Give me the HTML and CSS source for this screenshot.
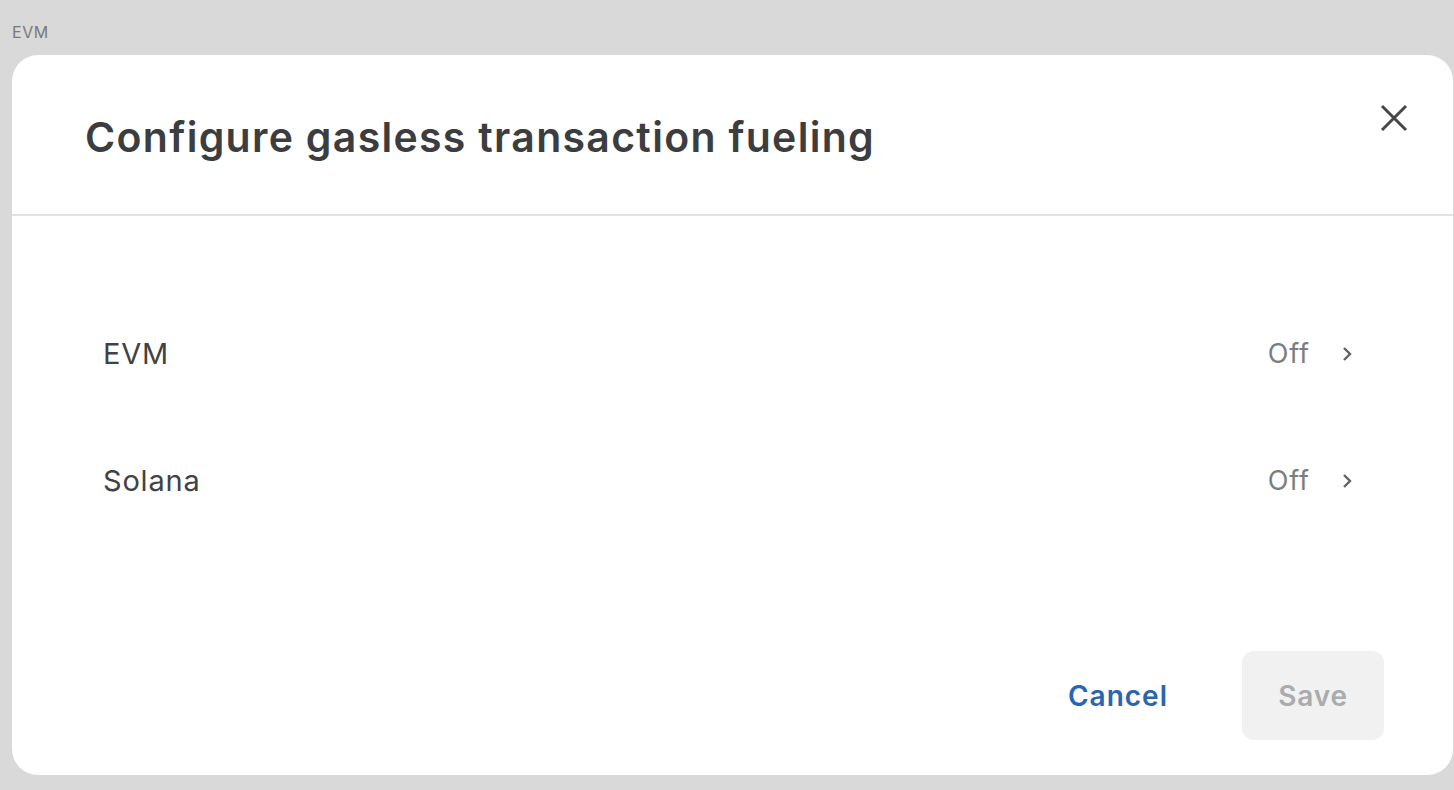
FILE: index.html
```html
<!DOCTYPE html>
<html>
<head>
<meta charset="utf-8">
<link rel="stylesheet" href="styles.css">
</head>
<body>
<div class="page">
  <div class="crumb">EVM</div>
  <div class="modal">
    <div class="modal-head">
      <h1 class="title">Configure gasless transaction fueling</h1>
      <button class="close" aria-label="Close">
        <svg width="30" height="30" viewBox="0 0 30 30"><path d="M3 3 L27 27 M27 3 L3 27" stroke="#444746" stroke-width="3" stroke-linecap="butt" fill="none"/></svg>
      </button>
    </div>
    <div class="modal-body">
      <div class="row">
        <span class="row-label">EVM</span>
        <span class="row-value">Off
          <svg class="chev" width="12" height="16" viewBox="0 0 12 16"><path d="M3 2 L9 8 L3 14" stroke="#5f6368" stroke-width="2.4" fill="none"/></svg>
        </span>
      </div>
      <div class="row">
        <span class="row-label">Solana</span>
        <span class="row-value">Off
          <svg class="chev" width="12" height="16" viewBox="0 0 12 16"><path d="M3 2 L9 8 L3 14" stroke="#5f6368" stroke-width="2.4" fill="none"/></svg>
        </span>
      </div>
    </div>
    <div class="modal-foot">
      <button class="btn-cancel">Cancel</button>
      <button class="btn-save" disabled>Save</button>
    </div>
  </div>
</div>
</body>
</html>
```
FILE: styles.css
```css
html, body {
  margin: 0;
  padding: 0;
  background: #d9d9d9;
  font-family: "Inter", "Open Sans", sans-serif;
}
.page {
  width: 1454px;
  height: 790px;
  box-sizing: border-box;
  padding: 22px 0 0 12px;
  overflow: hidden;
}
.crumb {
  font-size: 16px;
  color: #7a7a7a;
  line-height: 20px;
  height: 33px;
  letter-spacing: 0.6px;
}
.modal {
  width: 1441px;
  height: 720px;
  background: #fff;
  border-radius: 26px;
  display: flex;
  flex-direction: column;
}
.modal-head {
  height: 159px;
  border-bottom: 2px solid #e2e2e2;
  display: flex;
  align-items: flex-start;
  justify-content: space-between;
  padding: 0 44px 0 73px;
}
.title {
  margin: 54px 0 0 0;
  font-size: 41px;
  font-weight: 600;
  color: #3c3d3f;
  letter-spacing: 1.3px;
  line-height: 56px;
}
.close {
  margin-top: 48px;
  background: none;
  border: 0;
  padding: 0;
  width: 30px;
  height: 30px;
}
.modal-body {
  flex: 1;
  padding: 103px 100px 0 91px;
}
.row {
  height: 127px;
  display: flex;
  align-items: flex-start;
  justify-content: space-between;
}
.row-label {
  font-size: 29px;
  color: #404246;
  line-height: 70px;
  letter-spacing: 0.8px;
}
.row-value {
  font-size: 27px;
  color: #7b7d80;
  line-height: 70px;
  display: flex;
  align-items: center;
  gap: 31px;
  letter-spacing: 0.9px;
}
.chev {
  display: block;
}
.modal-foot {
  display: flex;
  justify-content: flex-end;
  align-items: center;
  gap: 74px;
  padding: 0 69px 35px 0;
}
.btn-cancel {
  background: none;
  border: 0;
  padding: 0;
  font-family: "Inter", sans-serif;
  font-size: 28px;
  font-weight: 600;
  color: #2a65b0;
  letter-spacing: 1px;
}
.btn-save {
  width: 142px;
  height: 89px;
  border: 0;
  border-radius: 12px;
  background: #f1f1f1;
  font-family: "Inter", sans-serif;
  font-size: 28px;
  font-weight: 600;
  color: #a9abae;
  letter-spacing: 0.8px;
}
```
